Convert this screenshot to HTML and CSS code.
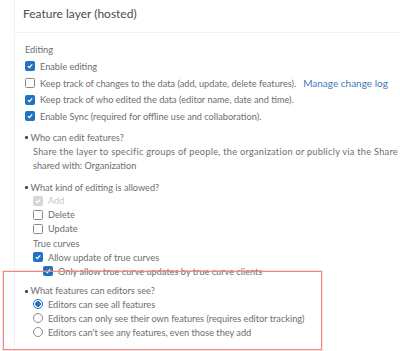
FILE: index.html
```html
<!DOCTYPE html>
<html lang="en">
<head>
  <meta charset="UTF-8">
  <meta name="viewport" content="width=device-width, initial-scale=1.0">
  <title>Feature layer (hosted)</title>
  <link rel="stylesheet" href="styles.css">
</head>
<body>
  <div class="panel">
    <div class="panel-header">Feature layer (hosted)</div>

    <div class="panel-body">
      <div class="editing">
        <div class="group-label">Editing</div>
        <div class="row">
          <span class="box checked"><svg viewBox="0 0 10 10"><path d="M2.3 5.2 L4.2 7.1 L7.8 3"/></svg></span>
          <span>Enable editing</span>
        </div>
        <div class="row">
          <span class="box"></span>
          <span>Keep track of changes to the data (add, update, delete features).<a class="link" href="#">Manage change log</a></span>
        </div>
        <div class="row">
          <span class="box checked"><svg viewBox="0 0 10 10"><path d="M2.3 5.2 L4.2 7.1 L7.8 3"/></svg></span>
          <span>Keep track of who edited the data (editor name, date and time).</span>
        </div>
        <div class="row">
          <span class="box checked"><svg viewBox="0 0 10 10"><path d="M2.3 5.2 L4.2 7.1 L7.8 3"/></svg></span>
          <span>Enable Sync (required for offline use and collaboration).</span>
        </div>
      </div>

      <div class="question who">
        <div class="q-title"><span class="dot"></span>Who can edit features?</div>
        <div class="desc">
          <div class="desc-long">Share the layer to specific groups of people, the organization or publicly via the Share</div>
          <div>shared with: Organization</div>
        </div>
      </div>

      <div class="question kind">
        <div class="q-title"><span class="dot"></span>What kind of editing is allowed?</div>
        <div class="opts">
          <div class="opt disabled">
            <span class="box checked"><svg viewBox="0 0 10 10"><path d="M2.3 5.2 L4.2 7.1 L7.8 3"/></svg></span>
            <span>Add</span>
          </div>
          <div class="opt"><span class="box"></span><span>Delete</span></div>
          <div class="opt"><span class="box"></span><span>Update</span></div>
          <div class="opt"><span>True curves</span></div>
          <div class="opt">
            <span class="box checked"><svg viewBox="0 0 10 10"><path d="M2.3 5.2 L4.2 7.1 L7.8 3"/></svg></span>
            <span>Allow update of true curves</span>
          </div>
          <div class="opt nested">
            <span class="box checked"><svg viewBox="0 0 10 10"><path d="M2.3 5.2 L4.2 7.1 L7.8 3"/></svg></span>
            <span>Only allow true curve updates by true curve clients</span>
          </div>
        </div>
      </div>

      <div class="question see">
        <div class="q-title"><span class="dot"></span>What features can editors see?</div>
        <div class="opts">
          <div class="opt"><span class="radio selected"></span><span>Editors can see all features</span></div>
          <div class="opt"><span class="radio"></span><span>Editors can only see their own features (requires editor tracking)</span></div>
          <div class="opt"><span class="radio"></span><span>Editors can't see any features, even those they add</span></div>
        </div>
      </div>
    </div>
  </div>

  <div class="highlight"></div>
</body>
</html>
```

FILE: styles.css
```css
body {
  margin: 0;
  font-family: Lato, "Noto Sans", sans-serif;
  font-size: 9.2px;
  color: #6e6e6e;
  background: #fff;
  overflow: hidden;
}

.panel {
  margin-left: 14px;
  border-left: 1px solid #f1f1f1;
  min-height: 351px;
}

.panel-header {
  height: 32px;
  line-height: 27px;
  padding-left: 8px;
  font-size: 12px;
  color: #4c4c4c;
  border-bottom: 1px solid #f1f1f1;
}

.panel-body {
  padding: 9px 0 0 10px;
}

.group-label {
  line-height: 16px;
}

.row {
  display: flex;
  align-items: center;
  height: 16.67px;
  white-space: nowrap;
}

.box {
  flex: none;
  box-sizing: border-box;
  width: 10px;
  height: 10px;
  margin-right: 5px;
  border: 1px solid #8a8a8a;
  border-radius: 1.5px;
  background: #fff;
  display: inline-flex;
}

.box.checked {
  border-color: #1f73c1;
  background: #1f73c1;
}

.box svg {
  width: 100%;
  height: 100%;
}

.box svg path {
  fill: none;
  stroke: #fff;
  stroke-width: 1.6;
}

.link {
  margin-left: 7px;
  font-size: 10px;
  color: #3f7ab3;
  text-decoration: none;
}

.question {
  white-space: nowrap;
}

.q-title {
  display: flex;
  align-items: center;
  line-height: 12px;
}

.dot {
  width: 2.5px;
  height: 2.5px;
  border-radius: 50%;
  background: #444;
  margin: 0 3px 0 0;
}

.who {
  margin-top: 7px;
}

.desc {
  padding: 1px 0 0 8px;
  line-height: 14.5px;
}

.desc-long {
  letter-spacing: 0.27px;
}

.kind {
  margin-top: 8px;
}

.opts {
  padding-left: 8px;
}

.opt {
  display: flex;
  align-items: center;
  height: 14.14px;
}

.opt.nested {
  padding-left: 10px;
}

.opt.disabled {
  color: #c8c8c8;
}

.opt.disabled .box {
  border-color: #d6d6d6;
  background: #d6d6d6;
}

.see {
  margin-top: 7px;
}

.see .opt {
  height: 14px;
}

.radio {
  flex: none;
  box-sizing: border-box;
  width: 10px;
  height: 10px;
  margin-right: 5px;
  border: 1px solid #8a8a8a;
  border-radius: 50%;
  background: #fff;
}

.radio.selected {
  border: 1px solid #1f73c1;
  background: radial-gradient(circle, #1f73c1 0 2.6px, #fff 3px);
}

/* annotation box drawn over the last question */
.highlight {
  position: absolute;
  left: 3px;
  top: 271px;
  width: 319px;
  height: 79px;
  box-sizing: border-box;
  border: 1px solid #f28686;
  box-shadow: 0 0 0 0.5px rgba(244, 150, 150, 0.6);
}
```
